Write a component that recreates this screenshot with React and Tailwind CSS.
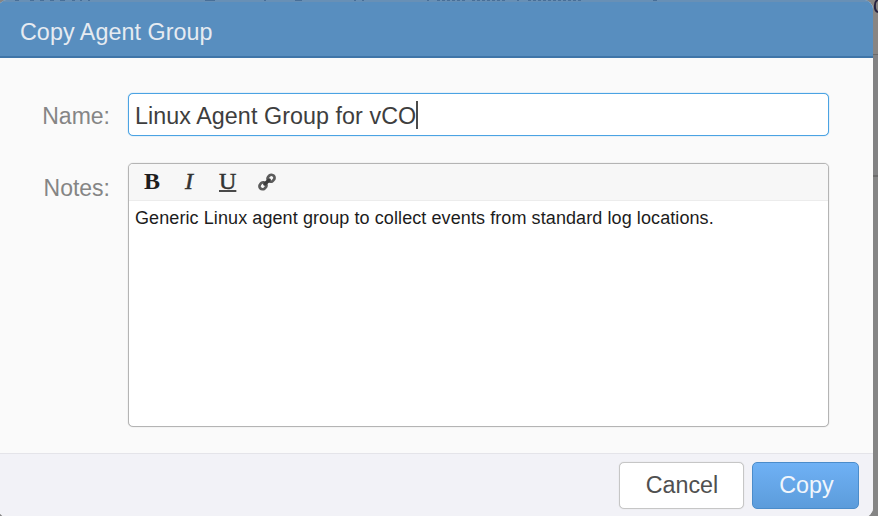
import { useState } from "react";

const LinkIcon = () => (
  <svg width="20" height="20" viewBox="0 0 20 20" fill="none">
    <g transform="rotate(-43 10 10)" stroke="#5c5c5c">
      <rect x="0.8" y="6.9" width="7.4" height="6.2" rx="3.1" strokeWidth="2.7" />
      <rect x="11.8" y="6.9" width="7.4" height="6.2" rx="3.1" strokeWidth="2.7" />
      <path d="M7 10h6" stroke="#3d3d3d" strokeWidth="3.4" strokeLinecap="round" />
    </g>
  </svg>
);

// Bits of the dimmed page's text that show along the dialog's top edge
const PageEdge = () => (
  <svg className="absolute left-0 top-0" width="700" height="2" fill="none">
    <g stroke="#486f98" strokeWidth="1">
      <path d="M15 .5h4M30 .5h4M40 .5h4M50 .5h4M60 .5h5M72 .5h3M80 .5h2M88 .5h2M205 .5h10M264 .5h2M295 .5h7M354 .5h2M362 .5h2M427 .5h2M517 .5h2M653 .5h4" />
      <path d="M437 .5h28M472 .5h33M528 .5h53" strokeDasharray="3 2" />
    </g>
  </svg>
);

const App = () => {
  const [name, setName] = useState("Linux Agent Group for vCO");

  return (
    <div className="relative h-[516px] w-[878px] overflow-hidden bg-[#858585] font-['Liberation_Sans',Arial,sans-serif] text-[23.3px]">
      {/* Dimmed page behind the dialog */}
      <div className="ml-[873px] h-[55px] overflow-hidden border-b border-[#6b6b6b] bg-[#888583]">
        <svg width="5" height="14" viewBox="0 0 5 14" fill="none">
          <path d="M5 0C0.800 1 0.800 11 5 12" stroke="#25213f" strokeWidth="2" />
        </svg>
      </div>
      <div className="ml-[873px] h-[122px] border-b-2 border-[#6c6c6c] bg-[#828283]" />

      {/* Dialog */}
      <div className="absolute -left-0.5 top-0 flex h-[517px] w-[875px] flex-col overflow-hidden rounded-[9px] bg-[#fafafa]">
        <div className="flex h-[58px] shrink-0 items-center border-b-2 border-t-2 border-b-[#3f75a8] border-t-[#6890b6] bg-[#588ebf] pl-[22px] pt-1.5 text-[#e6ebf1]">
          <h1 className="tracking-[0.05px]">Copy Agent Group</h1>
        </div>

        <div className="grid grid-cols-[112px_701px] content-start gap-x-[18px] gap-y-[27px] pt-[35px] text-[#858585]">
          <label htmlFor="name" className="pt-1.5 text-right text-[23px]">
            Name:
          </label>
          <div className="relative h-[43px]">
            <input
              id="name"
              type="text"
              value={name}
              onChange={(e) => setName(e.target.value)}
              className="h-full w-full rounded-[5px] border-[1.5px] border-[#4ba3e3] bg-white pl-1.5 pt-[3px] tracking-[0.06px] text-[#3e3e3e] shadow-[0_0_1px_#4ba3e3] outline-none"
            />
            <span className="absolute left-[288px] top-2 h-[28px] w-[2px] bg-[#4b4b4b]" />
          </div>

          <span className="pt-2 text-right text-[23px]">Notes:</span>
          <div className="h-[264px] overflow-hidden rounded-[5px] border border-[#b4b4b4] bg-white shadow-[0_0_1px_#b4b4b4]">
            <div className="flex h-[37px] items-center border-b border-[#ececec] bg-[#f7f7f7] pl-[15px] font-['Liberation_Serif',serif] text-[24px] leading-none text-[#333333]">
              <button className="w-[41px] pb-0.5 text-left font-bold text-[#1d1d1d]">B</button>
              <button className="w-[34px] pb-0.5 text-left italic [-webkit-text-stroke:0.5px_#333333]">I</button>
              <button className="w-[38px] pb-0.5 text-left underline decoration-[#4a4a4a] decoration-2 underline-offset-1 [-webkit-text-stroke:0.5px_#333333]">U</button>
              <button>
                <LinkIcon />
              </button>
            </div>
            <p className="whitespace-nowrap pl-1.5 pt-1 text-[18px] leading-[27px] tracking-[0.09px] text-[#1c1c1c]">
              Generic Linux agent group to collect events from standard log locations.
            </p>
          </div>
        </div>

        <div className="mt-auto flex h-[64px] shrink-0 items-start justify-end gap-2 border-t border-[#e4e4e9] bg-[#f2f2f7] pr-3.5 pt-2">
          <button className="h-[47px] w-[125px] rounded-[5px] border-[1.5px] border-[#c6c6c6] bg-white pl-px text-[#505050] shadow-[0_0_1px_#c6c6c6]">
            Cancel
          </button>
          <button className="h-[47px] w-[107px] rounded-[5px] border border-[#4b8cca] bg-linear-to-b from-[#6fb1f5] to-[#5c9cdb] pl-0.5 text-[#f1f6fc]">
            Copy
          </button>
        </div>
      </div>
      <PageEdge />
    </div>
  );
};

export default App;
